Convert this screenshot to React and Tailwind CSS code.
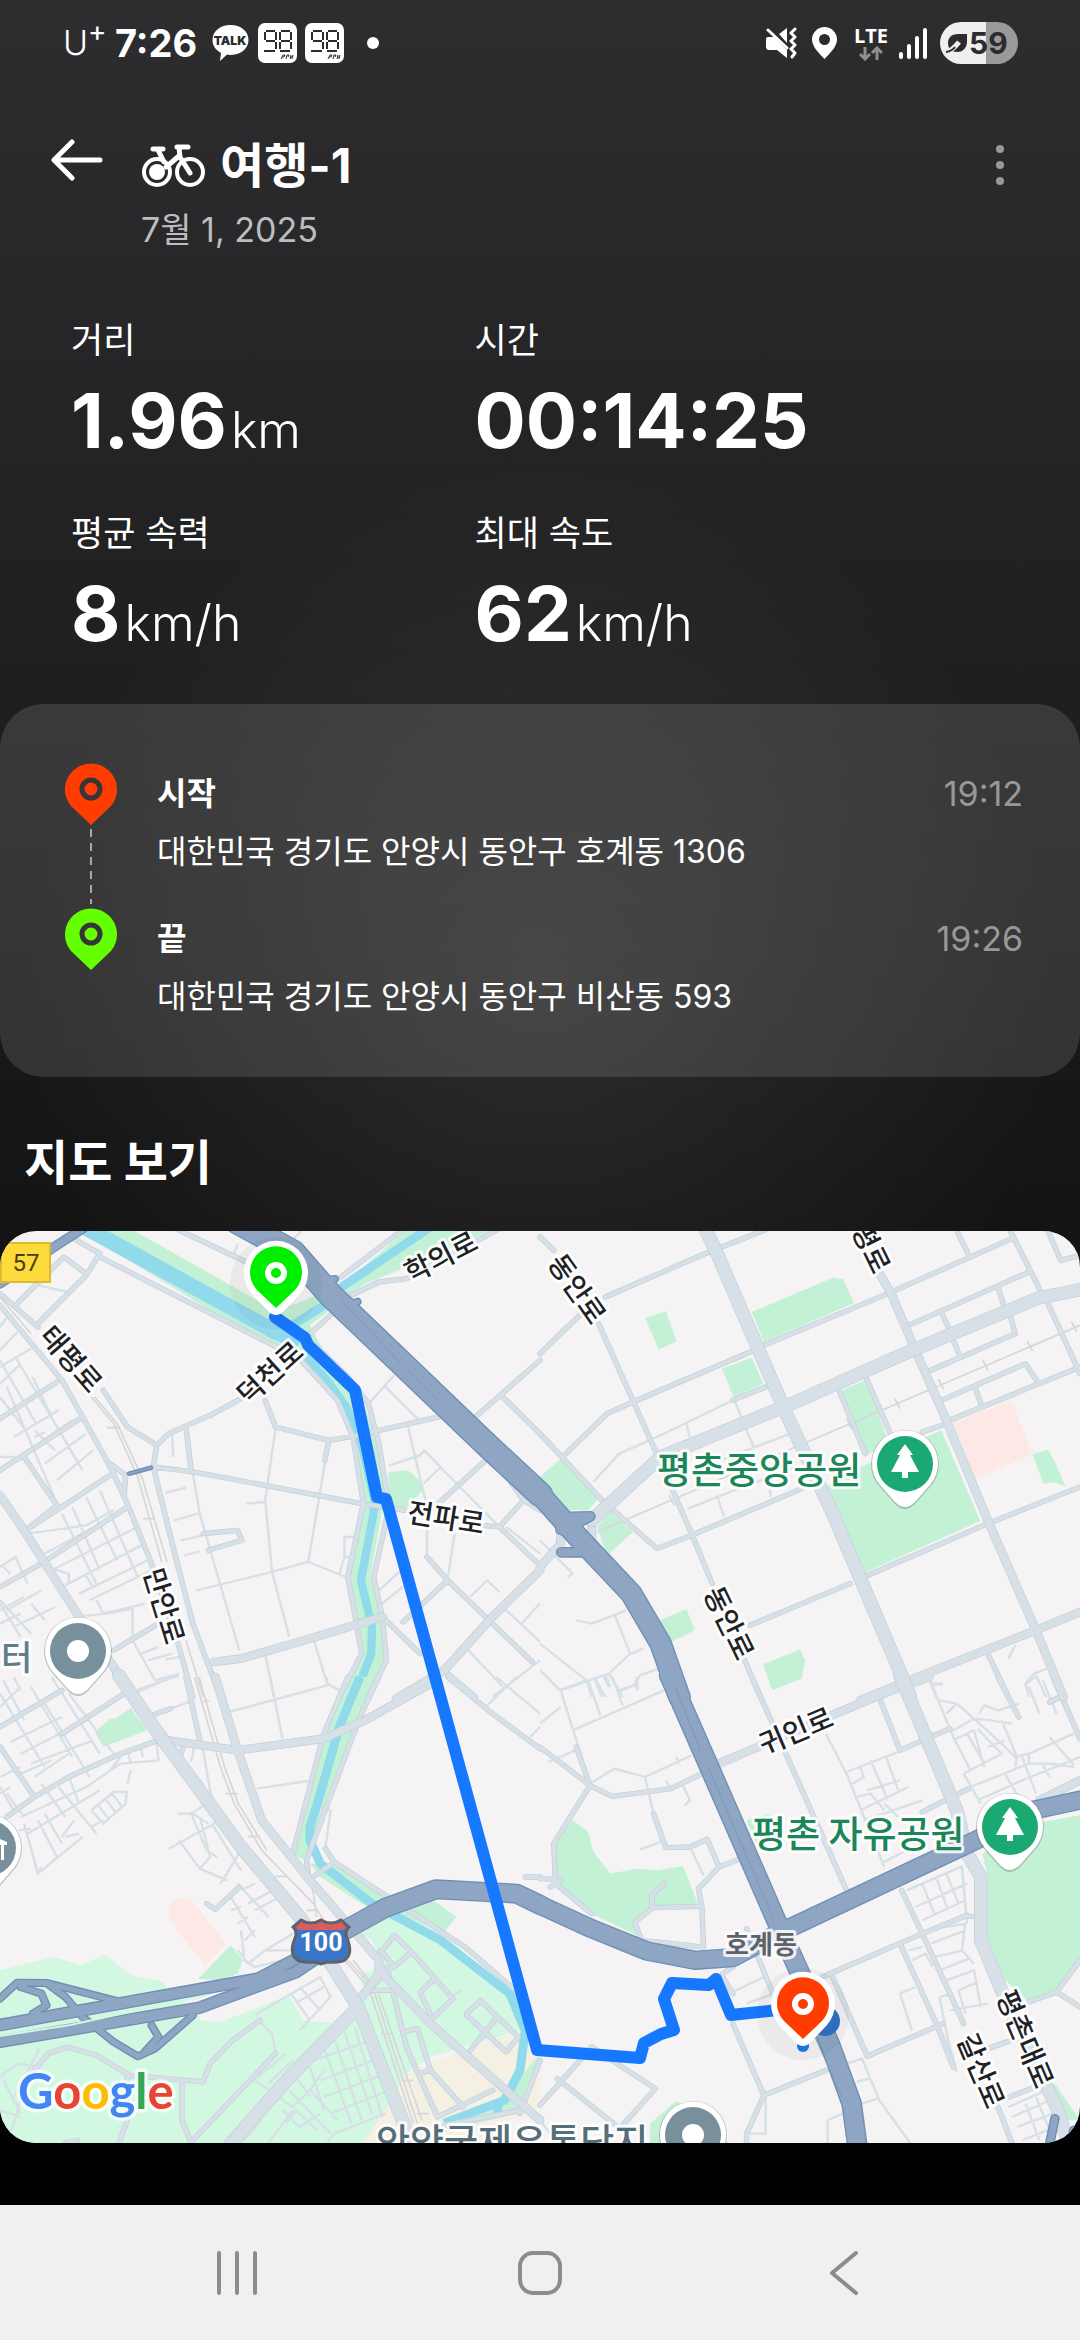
import clsx from "clsx";

const STATS = [
  { label: "거리", value: "1.96", unit: "km" },
  { label: "시간", value: "00:14:25" },
  { label: "평균 속력", value: "8", unit: "km/h" },
  { label: "최대 속도", value: "62", unit: "km/h" },
];

const STOPS = [
  { name: "시작", address: "대한민국 경기도 안양시 동안구 호계동 1306", time: "19:12", color: "#ff3d00" },
  { name: "끝", address: "대한민국 경기도 안양시 동안구 비산동 593", time: "19:26", color: "#64ff00" },
];

// The map is stored as four tiles, each with its own local grid.
// areas: [fill, polygon points], highways and water: [width, path]
const TILES = [
  {
    id: "nw",
    transform: "translate(0 1220) scale(.3444 .3333)",
    areas: [
      ["green", "215,30 370,30 790,275 860,260 1000,200 1190,30 1450,30 1180,150 1060,200 1000,245 900,325 960,440 1050,540 1090,660 1125,800 1110,880 1075,1080 1110,1200 1120,1330 1070,1440 985,1440 1045,1310 1015,1080 1055,860 1030,680 980,550 850,420 800,400"],
      ["green", "1128,765 1185,760 1225,795 1228,820 1200,850 1180,875 1130,875"],
      ["green", "1400,625 1568,780 1568,840 1540,800"],
    ],
    water: [
      [46, "M245,30 L800,345 L870,375"],
      [26, "M1250,30 L985,215 M940,265 L850,325"],
      [24, "M880,410 L950,490 L1005,570 L1050,680 L1090,860 L1048,1090 L1080,1230 L1078,1310 L1030,1440"],
    ],
    rail: "M0,240 L90,350 M265,540 L330,620 L400,780 L470,1035 M275,540 L340,620 L412,780 L485,1035 M540,1270 L590,1440 M310,632 H350 M415,905 H450",
    minor:
      "M545,635 L560,770 L580,890 L640,1105 L695,1300 M800,635 L770,850 L790,1065 L840,1260 M945,730 L895,1035 L790,1065 L570,1120 M895,1035 L1005,1080 M715,860 L768,855 M500,655 L503,720 M480,828 L540,812 M505,910 L575,890 M525,970 L590,955 M535,1015 L580,1003 M770,1310 L795,1440 M910,1265 L950,1400 L985,1420 M480,1328 L520,1320 M545,1200 L565,1200 " +
      "M110,205 L200,225 M680,110 L690,80 M840,80 L875,42 M615,590 V605 M1000,1020 H1012 M1030,960 H1000 V1020 L985,1075 " +
      "M1115,505 L1215,608 M1075,555 L1145,475 M1185,630 L1235,850 M1130,745 L1220,715 L1232,700 L1280,750 L1230,800 M1230,700 L1450,930 M1320,950 L1300,1085 M1365,1140 L1415,1090 L1450,1125 M1240,900 V1020 M1470,1180 L1568,1275 M1100,1120 L1160,1065 M1110,1160 L1180,1100 M1360,1300 L1460,1410 M1470,930 L1568,1010 M1510,1225 L1568,1160 M1430,1440 L1568,1330 " +
      "M0,330 L20,300 M0,400 L50,345 M0,450 L90,395 M20,510 L165,860 M0,430 L105,620 M45,420 L240,760 M0,540 L75,640 M95,480 L150,600 M0,600 L40,575 M0,500 L60,440 M40,660 L170,580 M100,690 L210,610 M130,740 L250,650 M165,790 L270,700 M100,640 L160,700 M0,720 H45 M100,660 L130,645 " +
      "M80,950 L250,925 L330,880 M130,1010 L330,900 M290,820 L400,1080 M250,840 L340,1030 M210,870 L290,1060 M180,890 L280,1100 M150,1060 L400,930 M190,1105 L420,980 M230,1130 L430,1030 M260,1150 L440,1060 M130,1050 L200,1070 V1100 M280,1150 L300,1190 L420,1160 M215,1200 L310,1190 L385,1175 V1270 M385,1270 L450,1390 L520,1370 M410,1310 L460,1290 M395,1420 L520,1375 M430,1330 L500,1310 M245,1070 L270,1110 " +
      "M0,1050 L45,1020 L80,1100 M10,1050 L30,1070 M0,1150 L90,1250 M20,1180 L120,1120 M0,1220 L60,1190 M40,1230 L160,1170 M0,1160 L60,1260 M90,1160 L130,1210 M0,1180 L70,1140",
    streets:
      "M290,120 L870,425 L980,550 L1025,660 L1055,860 L1010,1080 L1035,1220 L1050,1310 L985,1440 M890,360 L1010,480 L1070,560 L1100,680 L1130,870 L1085,1080 L1110,1200 L1122,1330 L1070,1440 M0,265 L180,490 L240,600 L320,750 L370,860 L440,1040 L520,1290 L560,1440 M0,230 L110,330 M300,520 L370,630 L455,685 L445,750 L500,980 L560,1220 L640,1440 M455,685 L490,650 L620,590 L700,545 M445,750 L560,765 L770,805 L1050,860 L1175,880 M540,630 L555,765 M770,550 L800,630 L955,670 L1025,658 L1280,598 M955,670 L943,730 M0,605 L165,495 M0,760 L240,600 M75,940 L320,775 M120,1040 L370,870 M0,1110 L120,1040 M320,740 L365,775 L360,840 M330,1300 L460,1220 M590,950 L690,940 L702,970 L605,1000 M205,60 L290,110 L250,175 L110,320 M50,260 L185,120 L250,170 M500,30 L715,135 M990,180 L1180,30 M900,350 L970,285 M1010,240 L1100,195 L1180,185 L1460,30 M70,720 L165,865 L75,940 M1375,605 L1568,430 M1455,535 L1568,650 M1410,730 L1230,900 M1460,760 L1520,850 L1450,930 L1400,925 M1450,930 L1568,1045 M1240,1020 L1300,1090 L1420,1210 L1545,1335 M1300,1090 L1170,1215 M1110,1200 L1220,1310 M1290,1360 L1380,1440 M1520,850 L1568,880",
    avenues: "M0,835 L70,940 L230,1200 L330,1350 L385,1440 M620,1335 L700,1325 L900,1265 L1110,1200 M1150,1445 L1290,1360 L1420,1210 L1568,1060",
    highways: [
      [76, "M690,15 L850,105 L960,235 L1420,690 L1568,832"],
      [24, "M945,190 L972,186 M1015,262 L1038,254"],
      [30, "M0,200 L150,95 L240,35"],
      [14, "M375,770 L438,752"],
    ],
  },
  {
    id: "ne",
    transform: "translate(540 1220) scale(.3444 .3333)",
    areas: [
      ["green", "615,285 850,182 880,187 912,258 650,375"],
      ["green", "305,303 365,283 397,372 345,398"],
      ["green", "528,455 615,422 648,500 562,540"],
      ["green", "0,780 60,725 172,840 140,880 70,880"],
      ["green", "165,930 205,885 270,945 195,1015"],
      ["green", "875,520 950,488 1015,690 950,710"],
      ["green", "830,810 930,750 1165,640 1278,912 935,1070"],
      ["green", "340,1213 425,1177 450,1240 380,1275 405,1370"],
      ["green", "648,1342 755,1298 770,1330 760,1385 675,1420"],
      ["green", "1430,712 1475,698 1498,740 1525,808 1490,795 1462,800"],
      ["pink", "1200,618 1368,550 1430,710 1265,785"],
    ],
    water: [],
    rail: "M165,945 L770,678 L1568,325 M375,835 L390,865 M890,605 L905,635 M1030,545 L1045,575 M1157,487 L1172,517 M1286,430 L1301,460 M1415,372 L1430,402 M1543,314 L1558,344",
    minor:
      "M340,660 L430,615 L560,550 L650,515 M340,660 L230,710 L155,795 M425,620 L435,660 M565,550 L620,690 M510,735 L740,645 M430,875 L515,840 L740,750 M515,840 L535,900 M665,800 L670,840 " +
      "M0,970 L95,1070 L80,1080 M105,1210 L150,1220 L250,1180 M215,1190 L262,1310 L200,1370 L60,1420 L0,1360 M0,1280 L135,1390 M262,1312 L300,1295 M160,1385 L190,1440 M190,1375 L205,1410 M200,1370 L240,1440 M360,1350 L290,1375 L275,1400 L285,1420 M230,1420 L285,1400 M135,1390 L150,1440 M1380,1285 L1360,1325 M1130,1390 L1150,1440 M1135,1405 L1170,1400 M1470,1355 L1435,1370 L1410,1400 L1420,1440 M1440,1375 L1470,1440",
    streets:
      "M190,240 L490,105 L660,36 M0,410 L120,290 M0,60 L40,100 M170,320 L330,690 L440,950 L500,1100 M590,1320 L640,1440 M650,385 L1010,230 L1370,65 M270,555 L610,405 M70,715 L195,590 L270,555 M0,650 L180,850 L340,995 L440,955 L760,815 M560,550 L655,510 M940,1080 L1300,920 L1568,810 M610,1225 L900,1100 M1070,325 L1420,165 M1165,285 L1185,330 M1330,210 L1345,260 M1130,462 L1380,350 L1365,295 M1200,370 L1220,420 M1165,550 L1410,440 L1445,495 M1190,610 L1568,450 M1265,515 L1280,560 M870,525 L945,710 M950,490 L1030,680 M1110,645 L1180,620 M1300,1310 L1360,1440 M1360,30 L1450,215 M1475,260 L1568,470 M1205,30 L1245,115 M1470,30 L1512,130 L1568,115 M150,960 L170,1010 L280,1120 L340,1240",
    avenues: "M980,160 L1020,230 L1090,400 L1180,610 L1300,910 L1440,1240 L1520,1440 M930,1450 L1060,1395 L1440,1240 L1568,1185 M0,1050 L60,980 M60,980 V930 M150,970 V900",
    majors: "M470,15 L510,100 L715,590 L850,890 L1060,1400 L1075,1440 M150,910 L350,720 L720,565 L1080,400 L1450,242 L1568,218",
    highways: [
      [32, "M60,900 L146,898 L90,930 M62,1006 L135,1006 L150,1020 M60,938 L90,950 M95,965 H135"],
      [66, "M0,832 L110,960 L265,1130 L350,1280 L405,1440"],
    ],
  },
  {
    id: "sw",
    transform: "translate(0 1680) scale(.3444 .3333)",
    areas: [
      ["mint", "0,880 155,840 235,865 305,832 380,895 475,915 485,940 580,1010 580,1030 640,1035 840,955 880,1030 1000,1040 1060,940 1040,900 1110,860 1080,790 1020,760 1100,700 1200,720 1290,780 1510,960 1530,1055 1250,1140 1180,1190 1130,1300 1080,1400 0,1400"],
      ["sand", "1530,1055 1310,1135 1180,1190 1130,1280 1050,1400 1568,1400 1568,1100"],
      ["land", "1480,1330 1568,1290 1568,1400 1420,1400"],
      ["green", "1520,1190 1568,1130 1500,1310 1340,1350 1440,1270"],
      ["green", "275,165 320,125 335,125 380,92 428,160 300,210"],
      ["green", "1010,0 1100,0 1050,110 985,260 930,420 885,548 850,535 900,310 940,170"],
      ["green", "900,560 965,560 1130,665 1265,675 1325,720 1290,765 1200,730 1080,700 930,600"],
      ["green", "575,905 670,805 705,850 690,890 640,910"],
      ["pink", "488,710 498,675 525,662 565,680 655,800 595,865 510,755"],
    ],
    water: [
      [26, "M1045,0 L985,150 L930,350 L900,450 L900,490 L930,560 L1080,680 L1280,790 L1480,950 L1525,1060 L1510,1180 L1465,1270 L1290,1338 M1445,1270 V1320"],
    ],
    rail: "M565,0 L640,270 L680,380 L760,520 L910,680 L940,730 M578,0 L652,270 L692,380 L775,520 M590,72 H608 M655,350 H690 M720,478 H755 M800,598 H835 M890,700 H925 M895,550 L920,720 M1000,850 L1070,930 L1200,1340 M1010,850 L1082,930 L1212,1340 M1025,850 L1095,940 L1225,1330 M1105,1070 H1140 M1170,1210 H1200 M1210,1310 H1245",
    minor:
      "M0,90 L60,30 M10,10 L70,130 M0,50 L130,270 M40,0 L60,40 M90,30 L210,240 M130,80 L260,300 M150,0 L290,230 M200,50 L330,230 M0,150 L60,120 M30,195 L180,120 M60,230 L250,130 M90,260 L270,190 M60,290 L150,250 M100,300 L200,230 M0,300 L60,270 M0,330 L40,400 M20,350 L70,420 M0,350 L30,330 M120,320 L190,420 M170,330 L280,470 M60,420 L250,330 L350,260 L460,250 L455,200 M80,470 L290,340 M130,410 L180,500 M70,440 L110,590 L240,480 M55,460 L90,455 M110,430 L165,540 M180,480 L215,430 M110,590 L120,570 M190,480 L230,470 M200,300 L230,380 M380,280 L370,320 M320,280 L350,240 M370,220 L380,260 M410,215 L415,240 " +
      "M265,400 L330,345 H368 L365,380 L300,440 L265,400 M285,385 L315,425 M305,365 L335,405 M325,350 L355,390 M265,450 L300,430 " +
      "M555,255 L565,205 M585,190 L615,370 L555,410 H515 M490,515 L640,430 M555,410 L600,520 L630,540 M520,490 L580,575 L660,610 M580,420 L610,540 L580,575 M615,440 L700,580 M640,620 L700,520 M560,410 L605,440 M690,620 L780,720 M720,680 L810,630 M740,700 L830,650 M700,640 L740,620 M670,660 L740,780 M700,760 L710,850 L740,870 L840,845 M670,700 L700,690 M690,740 L720,720 M710,790 L740,760 M770,820 L850,770 M690,820 L720,860 L770,820 H840 M665,105 L950,25 M785,0 L820,185 M745,335 L895,312 M400,45 L500,0 M495,95 L550,75 M945,510 L960,400 L930,395 M1410,90 L1500,0 M1440,0 L1568,110 M1540,180 L1568,150 M950,0 V20 " +
      "M740,1015 L845,950 L930,900 L960,960 L870,1060 M845,950 L900,1030 M870,930 L930,1000 M865,975 L940,930 M960,860 L970,910 M750,1030 L790,1070 L800,1130 M740,1210 L850,1290 L900,1240 M750,1200 L830,1130 M780,1220 L850,1150 M820,1300 L870,1350 L930,1310 M830,1340 L860,1300 L920,1360 M560,1380 L740,1200 " +
      "M970,1080 L1050,1330 M1000,1065 L1080,1310 M1030,1050 L1110,1320 M940,1110 L1020,1340 M900,1170 L940,1300 M910,1150 L1080,1090 M930,1210 L1110,1140 M940,1260 L1120,1190 M960,1310 L1130,1240 M970,1370 L1120,1310 M860,1200 L900,1260 M940,1180 L900,1240 L980,1330 M950,1398 L970,1370 M840,1240 L960,1370 M780,1398 L850,1300 M700,1398 L760,1330 M1310,960 L1340,940 M0,1200 L50,1160 L120,1170 M40,1260 L115,1115 M0,1300 L60,1320 M75,1210 L40,1340 L20,1390 M10,1210 L60,1310",
    streets:
      "M0,150 L180,40 M180,170 L360,50 M20,420 L100,360 L200,300 L350,230 L460,190 M0,210 L100,360 M540,0 L580,190 M440,115 L495,95 M1300,0 L1430,110 L1568,215 M1100,0 L1045,120 L890,550 L895,610 L965,560 M1010,0 L940,170 L850,530 M945,515 L970,555 L1350,810 L1520,960 M520,240 L535,205 M600,680 L625,697 L695,630 M75,1210 L140,1130 L195,1110 L280,1135 L375,1195 L590,1215 L610,1160 L670,1095 L755,1030 M370,1190 V1330 L345,1400 M528,1220 V1330 L555,1398 M555,1395 L800,1130 M1110,820 L1145,775 L1195,825 L1145,870 L1105,820 M1195,825 L1315,965 L1255,1025 L1220,945 L1262,905 M1355,1010 L1395,970 L1505,1080 L1470,1125 L1355,1015 M1350,1140 L1440,1025 M1170,1065 L1212,1055 L1250,1180 L1345,1290 M1060,940 L1140,940 L1180,1110 L1270,1320 L1430,1240 M1215,1190 L1250,1180 M1080,930 L1140,870 M1120,870 L1145,940 M1510,1310 L1568,1150 M1290,1345 L1510,1300 M1525,600 H1568 M190,1398 L225,1390",
    avenues: "M460,185 L520,195 L690,220 L940,185 L1060,130 L1250,20 M625,0 L690,220 L760,430 L900,610 L1000,730 L1100,850 L1100,890 M1110,890 L1250,1040 L1568,1330 M1050,960 L1110,880",
    majors: "M345,-5 L460,170 L700,510 L870,720 L960,860 L1040,990 L1195,1400 M1040,990 L850,1190 L670,1400",
    highways: [
      [24, "M0,965 L50,917 L135,918 L350,975 M60,930 L120,950 L135,985 L95,1010 M135,918 L190,960 L240,1020 L330,1095 L400,1138 L450,1115 L560,1015 M440,1045 L460,1080 L420,1125"],
      [38, "M-20,1098 L580,992 L860,885 L940,830"],
      [38, "M-20,1048 L750,905 L870,840 L940,800"],
      [60, "M930,800 L1120,692 L1265,637 L1500,650 L1570,685"],
    ],
  },
  {
    id: "se",
    transform: "translate(540 1680) scale(.3444 .3333)",
    areas: [
      ["green", "45,495 95,430 140,465 155,525 205,590 280,575 340,580 415,567 460,685 330,690 270,735 280,775 150,710 45,620"],
      ["green", "1285,530 1300,600 1300,800 1340,900 1420,975 1500,945 1568,850 1568,415 1430,440"],
      ["green", "660,0 760,0 675,40"],
      ["green", "320,1400 320,1340 395,1272 430,1290 550,1400"],
      ["green", "600,430 665,410 680,480 630,500"],
      ["green", "1480,1220 1495,1220 1568,1330 1520,1330"],
    ],
    water: [],
    rail: "",
    minor:
      "M55,40 L135,10 M60,40 L115,220 L145,320 M0,140 L60,90 M95,160 L360,40 M140,10 L175,115 M210,0 L240,85 M55,40 L20,0 M185,0 L200,30 M160,10 L180,60 M280,0 L285,35 M225,45 L285,20 M25,255 L115,215 M145,320 L215,275 L305,300 L440,235 M305,300 L330,410 M365,310 L380,335 M395,240 L405,260 M415,325 L435,370 L420,385 M290,518 L350,495 M440,520 L475,595 " +
      "M830,170 L890,290 L1000,570 M890,285 L1040,225 M900,325 L940,300 L930,270 M960,250 L1010,370 M1005,240 L1040,340 M950,340 L1045,310 M920,360 L960,350 L1000,400 M930,400 L1070,330 M940,430 L1110,370 M1000,380 L1040,420 M990,560 L1100,500 " +
      "M1130,0 L1160,80 L1200,180 L1250,280 M1160,70 L1210,80 L1260,125 L1330,190 L1380,240 L1420,230 L1550,170 M1130,170 L1200,160 L1260,125 M1180,110 L1210,80 M1275,110 L1290,85 L1330,100 L1390,80 M1260,125 L1310,130 L1370,140 M1200,190 L1260,160 L1290,270 M1240,170 L1290,260 M1270,155 L1340,230 L1230,290 M1300,210 L1350,190 M1340,130 L1385,240 L1380,270 M1230,290 L1280,380 M1250,330 L1420,260 M1420,230 V260 L1480,260 L1550,270 M1480,180 L1550,265 M1400,240 L1440,350 M1350,290 L1390,360 M1270,370 L1400,310 L1568,240 M1460,265 L1480,300 M1410,20 L1440,0 M1420,30 L1450,110 M1460,10 L1500,110 M1135,20 H1170 " +
      "M1065,640 L1225,568 L1240,740 M1090,690 L1240,620 M1110,730 L1235,670 M1110,620 L1145,710 M1150,600 L1185,700 M1180,590 L1215,680 M1120,760 L1235,740 L1225,820 L1260,860 M1135,800 L1235,760 M1145,840 L1230,820 M1160,880 L1245,845 M1180,910 L1260,880 L1280,990 M1190,1000 L1300,980 M1215,940 L1270,915 M1215,940 L1235,1010 M1070,820 L1110,810 M1080,850 L1120,830 L1140,870 M1045,950 L1090,930 M1045,950 L1080,1060 M1160,960 L1200,950 M1160,960 L1185,1090 L1210,1185 M560,945 L660,895 M600,980 L680,950 M890,1160 L935,1145 L985,1270 L1075,1398 M920,1215 L955,1205 M935,1280 L980,1265 M835,1398 V1330 L880,1310 M655,1260 V1370 H600 M1360,1290 L1470,1240 M1370,1320 L1480,1270 M1385,1350 L1490,1310 M1400,1390 L1500,1350 M1410,1280 L1450,1390 M1440,1260 L1480,1360 M0,1330 L30,1370",
    streets:
      "M615,0 L890,640 M0,210 L145,325 L210,358 L380,335 L470,290 M145,325 L40,500 L45,620 L150,710 M0,605 L45,607 M30,630 L60,610 M105,210 L145,325 M330,410 L365,512 L435,510 L485,487 L520,570 M575,548 L520,570 L460,635 L470,690 L475,810 M360,620 L325,655 V695 L275,735 L295,790 L470,810 M330,692 L465,688 M530,890 L560,870 M985,60 L1045,220 L1190,155 M1330,0 L1390,120 M1490,0 L1568,185 M1480,75 L1510,60 M1110,405 L1245,335 M1050,640 L1110,770 L1230,1040 M820,900 L1110,770 L1240,715 M1230,718 H1270 M850,900 L950,1138 L1170,1040 M1420,975 L1500,945 L1568,990 M1500,945 L1568,850 M1045,800 L1155,1050 L1200,1170 M560,1040 L650,1255 L830,1180 M650,1255 L600,1370 V1400 M1300,1115 L1370,1090 M1330,1290 L1370,1398 M1350,1265 L1450,1225 M0,1285 L150,1110 L335,1235 L240,1345 M50,1205 L220,1345 M600,755 L680,960 M530,900 L560,950",
    avenues: "M515,262 L870,105 L1010,45 L1130,0 M1450,370 L1568,310",
    majors: "M1045,-5 L1210,400 L1240,530 L1280,600 V790 L1340,940 L1400,1080 L1500,1290 L1535,1400",
    highways: [
      [58, "M-5,682 L150,755 L310,822 L450,850 L560,842 L700,765 L1200,522 L1270,488 L1430,400 L1575,368"],
      [60, "M375,-5 L500,290 L690,740 L760,900 L845,1110 L905,1280 L922,1410"],
      [28, "M1495,1325 L1480,1400 M1550,1360 L1540,1400"],
    ],
  },
];

const FILLS = {
  green: "#c3f1d5",
  mint: "#d2f8e2",
  sand: "#f5f0e4",
  pink: "#fde8e6",
  land: "#f5f3f4",
};

const ROAD_LABELS = [
  { text: "학의로", x: 441, y: 1260, angle: -27 },
  { text: "태평로", x: 71, y: 1362, angle: 49 },
  { text: "덕천로", x: 270, y: 1376, angle: -42 },
  { text: "전파로", x: 446, y: 1521, angle: 9 },
  { text: "만안로", x: 164, y: 1609, angle: 73 },
  { text: "동안로", x: 577, y: 1292, angle: 55 },
  { text: "평로", x: 871, y: 1251, angle: 64 },
  { text: "동안로", x: 729, y: 1626, angle: 64 },
  { text: "귀인로", x: 796, y: 1734, angle: -23 },
  { text: "평촌대로", x: 1025, y: 2042, angle: 67 },
  { text: "갈산로", x: 981, y: 2074, angle: 67 },
];

const KR = '"Noto Sans CJK KR", sans-serif';

const Stroke = ({ d, width, color }) => (
  <path d={d} fill="none" stroke={color} strokeWidth={width} strokeLinejoin="round" />
);

const RoadPass = ({ pick, width, color }) =>
  TILES.map((t) => t[pick] && (
    <g key={t.id} transform={t.transform} strokeLinecap="round">
      <Stroke d={t[pick]} width={width} color={color} />
    </g>
  ));

const Road = ({ pick, width }) => (
  <>
    <RoadPass pick={pick} width={width + 4} color="#c2cfd9" />
    <RoadPass pick={pick} width={width} color="#d7e0e7" />
  </>
);

const HighwayPass = ({ inset, color }) =>
  TILES.map((t) => (
    <g key={t.id} transform={t.transform} strokeLinecap="round">
      {t.highways.map(([width, d]) => <Stroke key={d} d={d} width={width - inset} color={color} />)}
    </g>
  ));

const TripMarker = ({ x, y, color }) => (
  <g transform={`translate(${x} ${y})`}>
    <circle r="46" cy="10" fill="#3c4043" opacity=".05" />
    <path d="M0 42 Q-4 42 -8 38 L-24 21 A32 32 0 1 1 24 21 L8 38 Q4 42 0 42Z" fill="#fff" />
    <path d="M0 35 L-19 17 A26 26 0 1 1 19 17Z" fill={color} />
    <circle r="8" fill="none" stroke="#fff" strokeWidth="6" />
  </g>
);

const PoiPin = ({ x, y, color, children }) => (
  <g transform={`translate(${x} ${y})`}>
    <path d="M0 45 Q-5 45 -10 40 L-25 23 A34 34 0 1 1 25 23 L10 40 Q5 45 0 45Z" fill="#5f6368" opacity=".35" />
    <path d="M0 43 Q-5 43 -10 38 L-25 21 A33 33 0 1 1 25 21 L10 38 Q5 43 0 43Z" fill="#fff" />
    <circle r="28" fill={color} />
    {children}
  </g>
);

const Tree = () => (
  <path d="M0 -20 L8 -9 H5 L14 8 H3 V14 H-3 V8 H-14 L-5 -9 H-8Z" fill="#fff" />
);

const MapLabel = ({ x, y, size, color, weight = 500, anchor = "start", children }) => (
  <text
    x={x}
    y={y}
    fontSize={size}
    fontWeight={weight}
    fontFamily={KR}
    textAnchor={anchor}
    fill={color}
    stroke="#fff"
    strokeWidth="6"
    strokeOpacity=".85"
    strokeLinejoin="round"
    paintOrder="stroke"
  >
    {children}
  </text>
);

const TripMap = () => (
  <svg viewBox="0 1234 1080 912" className="block h-auto w-full rounded-[36px] bg-[#f5f3f4]" role="img" aria-label="지도">
    {TILES.map((t) => (
      <g key={t.id} transform={t.transform}>
        {t.areas.map(([fill, points]) => (
          <polygon key={points} points={points} fill={FILLS[fill]} />
        ))}
        {t.water.map(([width, d]) => (
          <Stroke key={d} d={d} width={width} color="#90daec" />
        ))}
        <Stroke d={t.rail} width={5} color="#d6d7d8" />
        <Stroke d={t.minor} width={7} color="#d7e0e7" />
      </g>
    ))}
    <Road pick="streets" width={12} />
    <Road pick="avenues" width={22} />
    <Road pick="majors" width={36} />
    <HighwayPass inset={0} color="#6f8fb4" />
    <HighwayPass inset={8} color="#8ea6c3" />
    <path d="M340 1302 L402 1368 M408 1373 L442 1407 M675 1690 L700 1752 M708 1770 L773 1920 M815 2040 L842 2100" stroke="#7c98bb" strokeWidth="1" fill="none" />
    <path d="M0 2039 L70 2028 L208 1998" stroke="#d2f8e2" strokeWidth="2" fill="none" />

    <polyline
      points="275,1320 305,1341 308,1348 355,1393 377,1500 386,1502 435,1680 537,2053 640,2061 644,2046 661,2037 674,2033 664,2002 672,1986 709,1988 716,1982 731,2018 778,2013"
      fill="none"
      stroke="#1677ff"
      strokeWidth="12"
      strokeLinejoin="round"
      strokeLinecap="round"
    />
    <circle cx="825" cy="2024" r="15" fill="#2f6fc4" />
    <circle cx="803" cy="2049" r="6" fill="#1677e6" />

    {ROAD_LABELS.map(({ text, x, y, angle }) => (
      <g key={`${text}-${x}`} transform={`translate(${x} ${y}) rotate(${angle})`}>
        <MapLabel x={0} y={10} size={28} color="#202124" anchor="middle">{text}</MapLabel>
      </g>
    ))}
    <MapLabel x={657} y={1487} size={37} color="#1c8659">평촌중앙공원</MapLabel>
    <MapLabel x={752} y={1851} size={37} color="#1c8659">평촌 자유공원</MapLabel>
    <MapLabel x={376} y={2159} size={37} color="#546e7a">안양국제유통단지</MapLabel>
    <MapLabel x={1} y={1673} size={34} color="#607d8b">터</MapLabel>
    <MapLabel x={761} y={1957} size={26} color="#5f6368" weight={700} anchor="middle">호계동</MapLabel>

    <PoiPin x={78} y={1654} color="#78909c"><circle r="11" fill="#fff" /></PoiPin>
    <PoiPin x={693} y={2138} color="#78909c"><circle r="11" fill="#fff" /></PoiPin>
    <PoiPin x={-12} y={1851} color="#78909c">
      <path d="M4 -7 L12 -9 L19 -6 V-3 H16 V12 H13 V-3 H4Z" fill="#fff" />
    </PoiPin>
    <PoiPin x={905} y={1467} color="#1aa873"><Tree /></PoiPin>
    <PoiPin x={1010} y={1830} color="#1aa873"><Tree /></PoiPin>

    <rect x="1" y="1246" width="49" height="39" fill="#fddb3a" stroke="#dcbb2c" strokeWidth="2" />
    <text x="26" y="1274" fontSize="24" fontFamily="Roboto, sans-serif" textAnchor="middle" fill="#4b3d12">57</text>

    <g transform="translate(321 1944)">
      <path d="M-20 -21 Q-10 -15 0 -21 Q10 -15 20 -21 L28 -14 Q23 -9 26 -3 Q33 14 22 20 Q14 22 6 21 L0 23 L-6 21 Q-14 22 -22 20 Q-33 14 -26 -3 Q-23 -9 -28 -14Z" fill="#3a76c8" stroke="#5f6368" strokeWidth="3" />
      <path d="M-20 -19 Q-10 -14 0 -19 Q10 -14 20 -19 L25 -14 L23 -11 H-23 L-25 -14Z" fill="#db5c5c" />
      <text y="10" fontSize="25" fontWeight="700" fontFamily="Roboto, sans-serif" textAnchor="middle" fill="#fff">100</text>
    </g>

    <text x="18" y="2112" fontSize="49" fontWeight="700" fontFamily="Lato, sans-serif" stroke="#fff" strokeOpacity=".7" strokeWidth="7" strokeLinejoin="round" paintOrder="stroke">
      <tspan fill="#4285f4">G</tspan>
      <tspan fill="#ea4335">o</tspan>
      <tspan fill="#fbbc05">o</tspan>
      <tspan fill="#4285f4">g</tspan>
      <tspan fill="#34a853">l</tspan>
      <tspan fill="#ea4335">e</tspan>
    </text>

    <TripMarker x={276} y={1276} color="#00ee00" />
    <TripMarker x={803} y={2007} color="#ff3d00" />
  </svg>
);

const SpeedAppIcon = () => (
  <svg width="39" height="40" viewBox="0 0 39 40" aria-hidden="true">
    <rect width="39" height="40" rx="7" fill="#fff" />
    <path d="M8 8 H17 M18 9 V17 M8 18 H17 M7 9 V17 M18 19 V26 M6 28 H17 M23 8 H32 M33 9 V17 M23 18 H32 M22 9 V17 M33 19 V26 M22 19 V26 M22 28 H32" stroke="#2c2c2e" strokeWidth="2" />
    <path d="M23 36 L25 32 H27 L26 34 H24 M28 36 L29 32 H31 L30 34 M32 36 L33 32 M34 36 L35 32 M32 34 H34" stroke="#2c2c2e" fill="none" />
  </svg>
);

const StatusBar = () => (
  <div className="flex h-[86px] items-center justify-between pr-[62px] pl-[63px]">
    <div className="flex items-center">
      <span className="w-[52px] text-[34px] leading-10 font-light">
        U<sup className="text-[28px] font-normal">+</sup>
      </span>
      <time className="w-[97px] text-[38px] leading-10 font-bold">7:26</time>
      <svg width="37" height="38" viewBox="0 0 37 38" aria-hidden="true">
        <path d="M18.500 1 C28.500 1 36.500 7 36.500 16 C36.500 25 28 31 18 31 L15 30.500 L8 37 L9 29 C4 26 .5 22 .5 16 C.5 7 8.500 1 18.500 1Z" fill="#fff" />
        <text x="18" y="21" fontSize="12" fontWeight="900" fontFamily="Inter, sans-serif" textAnchor="middle" fill="#2c2c2e">TALK</text>
      </svg>
      <div className="ml-[9px] flex gap-2">
        <SpeedAppIcon />
        <SpeedAppIcon />
      </div>
      <span className="ml-[23px] size-3 rounded-full bg-white" />
    </div>

    <div className="flex items-center">
      <svg width="31" height="32" viewBox="0 0 31 32" aria-hidden="true">
        <path d="M2 10 H8 L21 23 V31 L11 23 H2 Q0 22 0 20 V12 Q0 10 2 10Z M13 7 L21 1 V16Z" fill="#fff" />
        <path d="M2 3 L21 21" stroke="#fff" strokeWidth="3" strokeLinecap="round" />
        <path d="M29 2 L25 6 L29 10 L25 14 L29 18 L25 22 L29 26 L26 30" stroke="#fff" strokeWidth="3" strokeLinecap="round" strokeLinejoin="round" fill="none" />
      </svg>
      <svg className="ml-[15px]" width="25" height="32" viewBox="0 0 25 32" aria-hidden="true">
        <path fillRule="evenodd" d="M12.500 0 A12.500 12.500 0 0 1 25 12.500 C25 20 17 27 12.500 32 C8 27 0 20 0 12.500 A12.500 12.500 0 0 1 12.500 0Z M12.500 7 A5.500 5.500 0 1 0 12.500 18 A5.500 5.500 0 1 0 12.500 7Z" fill="#fff" />
      </svg>
      <div className="ml-[17px] flex flex-col items-center">
        <span className="font-['Open_Sans',sans-serif] text-[20px] leading-5 font-bold">LTE</span>
        <svg width="24" height="15" viewBox="0 0 24 15" aria-hidden="true">
          <path d="M6 1 V13 M1 8 L6 13 L11 8 M18 14 V2 M13 7 L18 2 L23 7" stroke="#8f8f91" strokeWidth="3" fill="none" />
        </svg>
      </div>
      <svg className="ml-[11px]" width="28" height="31" viewBox="0 0 28 31" aria-hidden="true">
        <path d="M2 26 V29 M10 18 V29 M18 10 V29 M26 2 V29" stroke="#fff" strokeWidth="4" strokeLinecap="round" />
      </svg>
      <div className="ml-[13px] flex h-[42px] w-[78px] items-center rounded-full bg-[linear-gradient(90deg,#efefef_59%,#9a9a9a_59%)] pl-[5px] text-[#2c2c2e]">
        <svg width="23" height="22" viewBox="0 0 23 22" aria-hidden="true">
          <path d="M22 2 H13 C6 2 3 6 3 11 C3 17 7 20 12 20 C19 20 22 15 22 9Z" fill="#2c2c2e" />
          <path d="M1 20 Q7 19 14 10" stroke="#efefef" strokeWidth="5" fill="none" />
          <path d="M1 20 Q7 19 10 15" stroke="#2c2c2e" strokeWidth="2" fill="none" />
        </svg>
        <span className="ml-px text-[30px] leading-9 font-bold">59</span>
      </div>
    </div>
  </div>
);

const BikeIcon = () => (
  <svg width="66" height="44" viewBox="0 0 66 44" fill="none" stroke="#fff" strokeWidth="4" strokeLinecap="round" strokeLinejoin="round" aria-hidden="true">
    <circle cx="16" cy="28" r="13" />
    <circle cx="16" cy="28" r="8" fill="#fff" stroke="none" />
    <circle cx="49" cy="28" r="13" />
    <path d="M12 5 H22 M17 6 L23 18 M25 23 L38 12 M36 3 H47 M38 4 L39 13 L49 29" strokeWidth="5" />
  </svg>
);

const StopPin = ({ color }) => (
  <svg width="52" height="62" viewBox="0 0 52 62" aria-hidden="true">
    <path d="M26 62 L6 43 A26 26 0 1 1 46 43Z" fill={color} />
    <circle cx="26" cy="26" r="9" fill="none" stroke="#363638" strokeWidth="5" />
  </svg>
);

const Header = () => (
  <header className="flex items-start pt-[50px] pr-[70px] pl-[51px]">
    <button type="button" aria-label="뒤로" className="mt-[3px] mr-[38px]">
      <svg width="52" height="42" viewBox="0 0 52 42" fill="none" stroke="#fff" strokeWidth="5" strokeLinecap="round" strokeLinejoin="round">
        <path d="M49 21 H4 M21 3 L3 21 L21 39" />
      </svg>
    </button>
    <div className="flex-1">
      <h1 className="flex items-center gap-[13px] text-[48px] leading-[60px] font-bold">
        <BikeIcon />
        여행-1
      </h1>
      <p className="mt-2 text-[34px] leading-[52px] text-[#bdbdbf]">7월 1, 2025</p>
    </div>
    <button type="button" aria-label="더보기" className="mt-[9px] flex w-5 flex-col items-center gap-2">
      <span className="size-2 rounded-full bg-[#98989a]" />
      <span className="size-2 rounded-full bg-[#98989a]" />
      <span className="size-2 rounded-full bg-[#98989a]" />
    </button>
  </header>
);

const NavBar = () => (
  <nav className="mt-auto flex h-[135px] items-center justify-around bg-[#f0f0f2] px-[86px]">
    <button type="button" aria-label="최근 앱">
      <svg width="46" height="46" viewBox="0 0 46 46" stroke="#8c8c8c" strokeWidth="4" strokeLinecap="round">
        <path d="M5 3 V43 M23 3 V43 M41 3 V43" />
      </svg>
    </button>
    <button type="button" aria-label="홈">
      <svg width="46" height="46" viewBox="0 0 46 46" fill="none" stroke="#8c8c8c" strokeWidth="4">
        <rect x="3" y="3" width="40" height="40" rx="13" />
      </svg>
    </button>
    <button type="button" aria-label="뒤로 가기">
      <svg width="46" height="46" viewBox="0 0 46 46" fill="none" stroke="#8c8c8c" strokeWidth="4" strokeLinecap="round" strokeLinejoin="round">
        <path d="M36 3 L12 23 L36 43" />
      </svg>
    </button>
  </nav>
);

const App = () => (
  <div className="flex min-h-screen flex-col bg-black bg-[radial-gradient(circle_520px_at_50%_980px,rgba(255,255,245,0.09),transparent),linear-gradient(#2d2d2f,#000_2200px)] font-[Inter,'Noto_Sans_CJK_KR',sans-serif] text-white">
    <StatusBar />
    <Header />

    <main>
      <dl className="mt-[60px] grid grid-cols-[2fr_3fr] gap-y-[41px] pl-[71px]">
        {STATS.map(({ label, value, unit }) => (
          <div key={label}>
            <dt className="text-[35px] leading-12">{label}</dt>
            <dd className="mt-2 text-[76px] leading-24 font-bold">
              {value}
              {unit && <span className="ml-1 text-[50px] leading-none font-light">{unit}</span>}
            </dd>
          </div>
        ))}
      </dl>

      <ol className="mt-[43px] rounded-[44px] bg-white/12 px-[57px] pt-[59px] pb-[56px]">
        {STOPS.map(({ name, address, time, color }, i) => (
          <li key={name} className={clsx("flex pl-2", i === 0 && "h-[145px]")}>
            <div className="flex w-[52px] flex-col items-center">
              <StopPin color={color} />
              {i === 0 && (
                <span className="my-1 w-[2px] flex-1 bg-[repeating-linear-gradient(#a8a8aa_0_8px,transparent_8px_14px)]" />
              )}
            </div>
            <div className="mt-[7px] ml-10 flex-1 text-[32px]">
              <h2 className="leading-12 font-bold">{name}</h2>
              <p className="mt-[10px] leading-12">{address}</p>
            </div>
            <time className="mt-[7px] text-[34px] leading-12 text-[#98989a]">{time}</time>
          </li>
        ))}
      </ol>

      <h2 className="px-6 pt-[54px] pb-9 text-[48px] leading-16 font-bold">지도 보기</h2>
      <TripMap />
    </main>

    <NavBar />
  </div>
);

export default App;
